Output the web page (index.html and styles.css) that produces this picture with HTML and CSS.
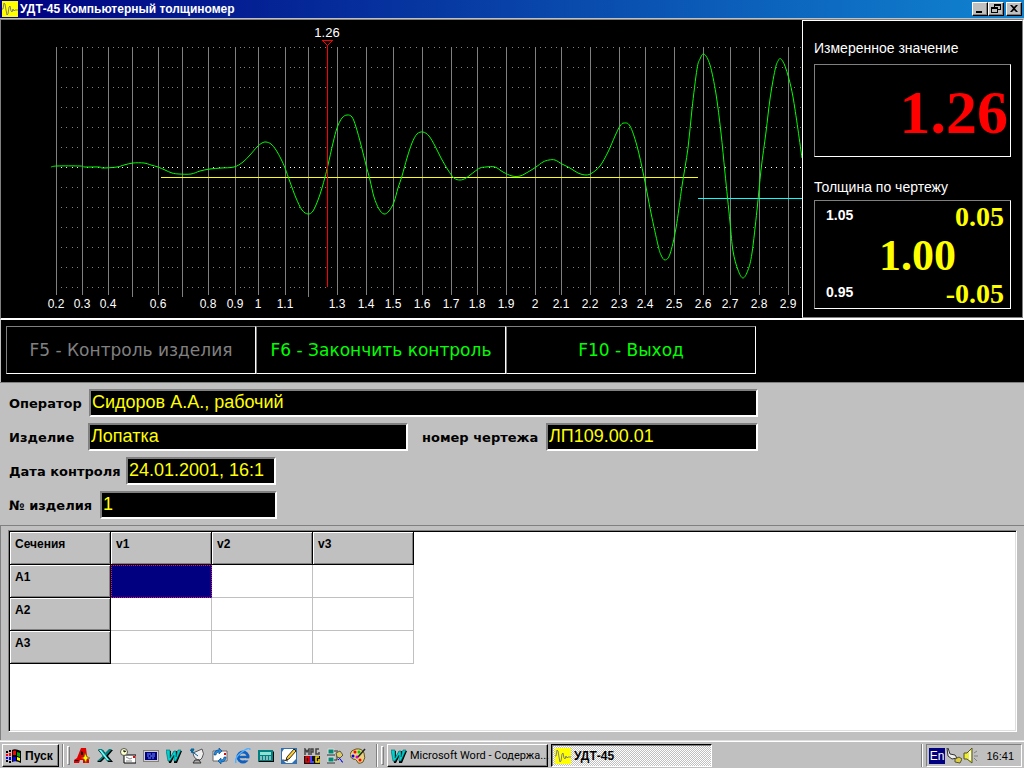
FILE: index.html
```html
<!DOCTYPE html>
<html lang="ru">
<head>
  <meta charset="UTF-8" />
  <meta name="viewport" content="width=device-width, initial-scale=1.0" />
  <title>УДТ-45 Компьютерный толщиномер</title>
  <link rel="stylesheet" href="styles.css">
</head>
<body>
  <header class="titlebar">
    <svg class="icon" viewBox="0 0 16 16"><rect width="16" height="16" fill="#ff0"/><path d="M0 8h1l1-6 1 1 1 6 1 5 1-1 1-7 1-1 1 5 1 1 1-3 1 2 1-1 3 0" fill="none" stroke="#808080"/></svg>
    <h1>УДТ-45 Компьютерный толщиномер</h1>
    <div class="window-buttons">
      <button aria-label="Свернуть"><svg viewBox="0 0 14 12"><path d="M3 8h6v2H3z"/></svg></button>
      <button aria-label="Восстановить"><svg viewBox="0 0 14 12"><path d="M5 1h7v6H9V6h2V3H6v1H5zM2 4h7v6H2zm1 2v3h5V6z" fill-rule="evenodd"/></svg></button>
      <button class="close" aria-label="Закрыть"><svg viewBox="0 0 14 12"><path d="M3 2h2l2 2 2-2h2L8 5.500l3 3.500H9L7 7 5 9H3l3-3.500z"/></svg></button>
    </div>
  </header>

  <main>
    <section class="scope">
      <svg class="chart" viewBox="0 0 801 298" preserveAspectRatio="xMinYMin meet">
        <g id="grid" shape-rendering="crispEdges"></g>
        <g id="labels"></g>
        <path class="gate" d="M160 157.500H697" stroke="#ff0"/>
        <path class="gate" d="M697 178.500H801" stroke="#0ff"/>
        <path id="signal" fill="none" stroke="#0f0"/>
        <path class="gate" d="M326.500 25V267M321.500 20.500h10l-5 5z" stroke="#f00" fill="none"/>
        <text class="cursor" x="326" y="17">1.26</text>
      </svg>
      <aside class="readout">
        <h2>Измеренное значение</h2>
        <div class="measured">1.26</div>
        <h2>Толщина по чертежу</h2>
        <div class="nominal">
          <div class="limits"><span>1.05</span><b>0.05</b></div>
          <strong>1.00</strong>
          <div class="limits"><span>0.95</span><b>-0.05</b></div>
        </div>
      </aside>
    </section>

    <nav class="keys">
      <button disabled>F5 - Контроль изделия</button>
      <button>F6 - Закончить контроль</button>
      <button>F10 - Выход</button>
    </nav>

    <form class="details">
      <div class="row">
        <label for="operator">Оператор</label>
        <input id="operator" class="wide" value="Сидоров А.А., рабочий">
      </div>
      <div class="row">
        <label for="product" class="product-label">Изделие</label>
        <input id="product" class="product" value="Лопатка">
        <label for="drawing" class="drawing-label">номер чертежа</label>
        <input id="drawing" class="drawing" value="ЛП109.00.01">
      </div>
      <div class="row">
        <label for="date" class="date-label">Дата контроля</label>
        <input id="date" class="date" value="24.01.2001, 16:1">
      </div>
      <div class="row">
        <label for="number" class="number-label">№ изделия</label>
        <input id="number" class="number" value="1">
      </div>
    </form>

    <section class="results">
      <div class="sheet">
        <table>
          <tr><th>Сечения</th><th>v1</th><th>v2</th><th>v3</th></tr>
          <tr><th>A1</th><td class="selected"></td><td></td><td></td></tr>
          <tr><th>A2</th><td></td><td></td><td></td></tr>
          <tr><th>A3</th><td></td><td></td><td></td></tr>
        </table>
      </div>
    </section>
  </main>

  <footer class="taskbar">
    <button class="start">
      <svg class="icon" viewBox="0 0 16 16"><path d="M6 2q3-2 9 1v12q-5-3-9-1z" fill="#000"/><path d="M7 3q2-1 3 0v4H7z" fill="#f00"/><path d="M11 4l3 1v4l-3-1z" fill="#0a0"/><path d="M7 9h3v4H7z" fill="#00f"/><path d="M11 9l3 1v3l-3-1z" fill="#ff0"/><path d="M0 3h2v2H0zM3 2h2v2H3z" fill="#000"/><path d="M0 6h2v2H0zM3 5h2v3H3z" fill="#f00"/><path d="M0 9h2v2H0zM3 9h2v3H3z" fill="#00f"/><path d="M0 12h2v2H0zM3 13h2v2H3z" fill="#000"/></svg>
      Пуск
    </button>
    <i class="divider"></i>
    <i class="grip"></i>
    <div class="quick">
      <svg class="icon" viewBox="0 0 16 16"><path d="M7 0h5l1 8 2 4v3H9v-3H6l-1 3H0v-3l3-2z" fill="#e00000"/><path d="M7 3l2 1v3H7zM1 12h4l-1 1H1z" fill="#000"/><path d="M11 5l2 4 3 1-3 1-1 4-2-4-3-1 3-1z" fill="#ff0" stroke="#804000" stroke-width=".6"/></svg>
      <svg class="icon" viewBox="0 0 16 16"><path d="M1 2h5l3 4 3-4h4l-5 6 5 6h-5l-3-4-4 4H0l6-6z" fill="#000"/><path d="M1 1h4l3 4 4-4h3L9 8l5 5h-4L7 9l-4 4H0l6-5z" fill="#008080"/><path d="M2 2h2l8 10h-2z" fill="#7ff"/></svg>
      <svg class="icon" viewBox="0 0 16 16"><path d="M4 7h12v8H4z" fill="#fff" stroke="#000"/><path d="M6 9l4 2 2-1M6 13h6" stroke="#888" fill="none"/><path d="M13 8h2v2h-2z" fill="#f00"/><circle cx="4" cy="4" r="3.500" fill="#ffc" stroke="#555"/><path d="M4 2v2l2-1" fill="none" stroke="#000"/></svg>
      <svg class="icon" viewBox="0 0 16 16"><path d="M0 2h16v12H0z" fill="#808080"/><path d="M1 3h14v10H1z" fill="#d4d0c8"/><path d="M2 4h12v8H2z" fill="#000080"/><path d="M4 6h4M9 6h3M4 8h2M7 8h5M5 10h3M9 10h2" stroke="#7090ff"/></svg>
      <svg class="icon" viewBox="0 0 16 16"><path d="M1 3h4l0 6 3-6h3v6l2-6h3l-5 12H8V9l-3 6H3z" fill="#000"/><path d="M0 2h4v8l4-7h2v6l2-7h3l-5 11H8V7l-4 6H2z" fill="#00d0d0" stroke="#006060" stroke-width=".6"/></svg>
      <svg class="icon" viewBox="0 0 16 16"><path d="M4 5l9-4q3 5 0 9l-2 2q-6 0-7-7z" fill="#eee" stroke="#555"/><path d="M1 2l8 6M2 1h3L3 5z" fill="#008080" stroke="#0060a0"/><path d="M6 12l-2 3h8l-2-3z" fill="#aaa" stroke="#333"/></svg>
      <svg class="icon" viewBox="0 0 16 16"><path d="M1 3h14v10H1z" fill="#fff" stroke="#666"/><path d="M12 5h2v2h-2z" fill="#f00"/><path d="M2 7q0-5 5-5V0l3 3-3 3V4q-3 0-3 3z" fill="#208be0" stroke="#004080" stroke-width=".6"/><path d="M14 9q0 5-5 5v2l-3-3 3-3v2q3 0 3-3z" fill="#208be0" stroke="#004080" stroke-width=".6"/></svg>
      <svg class="icon" viewBox="0 0 16 16"><circle cx="8" cy="9" r="5" fill="none" stroke="#1060c0" stroke-width="3"/><path d="M4 9h10" stroke="#1060c0" stroke-width="2.400"/><path d="M10 10.400h5v2h-5z" fill="#c0c0c0"/><path d="M1 15Q-1 10 7 4T15 2" fill="none" stroke="#50b0ff" stroke-width="1.500"/></svg>
      <svg class="icon" viewBox="0 0 16 16"><path d="M0 3h15l1 1v10H1l-1-1z" fill="#000"/><path d="M0 2h15v11H0z" fill="#008080"/><path d="M2 4h11v3H2z" fill="#8fe0d0"/><path d="M2 9h2M5 9h2M8 9h2M11 9h2M2 11h2M5 11h2M8 11h2M11 11h2" stroke="#fff"/></svg>
      <svg class="icon" viewBox="0 0 16 16"><path d="M0 0h16v16H0z" fill="#3070b0"/><path d="M3 1h9l3 3v7l-4 4H5l-4-4V4z" fill="#fff"/><path d="M5 12l1-3 7-8 2 2-7 8z" fill="#fc3" stroke="#000" stroke-width=".8"/><path d="M2 12l5 1" stroke="#333"/></svg>
      <svg class="icon" viewBox="0 0 16 16"><path d="M0 8h16v8H0z" fill="#111"/><path d="M1 7V1l2 3 2-3v6M7 7V1h2v3H7M15 1h-3v5h3V4" stroke="#444" stroke-width="1.500" fill="none"/><path d="M2 9v5h3V9z" stroke="#f00" stroke-width="1.500" fill="none"/><path d="M7 8v6h3" stroke="#44f" stroke-width="2" fill="none"/><path d="M15 9h-3v5h3v-3" stroke="#fd0" stroke-width="1.500" fill="none"/></svg>
      <svg class="icon" viewBox="0 0 16 16"><path d="M1 1h6v5H1zM1 9h6v5H1z" fill="#087" stroke="#ddd"/><path d="M0 7h8M0 15h8M7 3h4M7 12h3V8h2" stroke="#333" fill="none"/><path d="M9 5l4-2 3 4-3 3-3-1z" fill="#dc6" stroke="#554"/><path d="M11 12q2-3 3 0t2 2" stroke="#00f" fill="none"/></svg>
      <svg class="icon" viewBox="0 0 16 16"><path d="M6 1q6-1 8 4 2 5-1 9-5 3-6-1-1-2-4-2-4-2-3-5 1-4 6-5z" fill="#e8d080" stroke="#652"/><circle cx="5" cy="4" r="1.500" fill="#f00"/><circle cx="9" cy="4" r="1.500" fill="#0c0"/><circle cx="3" cy="8" r="1.500" fill="#00f"/><circle cx="7" cy="9" r="1.500" fill="#d0d"/><circle cx="10" cy="12" r="1.500" fill="#f00"/><path d="M8 9l7-8" stroke="#222" stroke-width="1.500"/></svg>
    </div>
    <i class="divider"></i>
    <i class="grip"></i>
    <button class="task">
      <svg class="icon" viewBox="0 0 16 16"><path d="M1 3h4l0 6 3-6h3v6l2-6h3l-5 12H8V9l-3 6H3z" fill="#000"/><path d="M0 2h4v8l4-7h2v6l2-7h3l-5 11H8V7l-4 6H2z" fill="#00d0d0" stroke="#006060" stroke-width=".6"/></svg>
      <span>Microsoft Word - Содержа...</span>
    </button>
    <button class="task active">
      <svg class="icon" viewBox="0 0 16 16"><rect width="16" height="16" fill="#ff0"/><path d="M0 8h1l1-6 1 1 1 6 1 5 1-1 1-7 1-1 1 5 1 1 1-3 1 2 1-1 3 0" fill="none" stroke="#808080"/></svg>
      <span>УДТ-45</span>
    </button>
    <i class="divider tray-divider"></i>
    <div class="tray">
      <span class="lang">En</span>
      <svg class="icon" viewBox="0 0 16 16"><path d="M1 0l1 8 4 3 5-1-2-3-5-1-2-6z" fill="#eee" stroke="#333"/><path d="M9 11l4-2 3 2-2 4-5-1z" fill="#dc4" stroke="#553"/></svg>
      <svg class="icon" viewBox="0 0 16 16"><path d="M1 5h3l5-5v15l-5-4H1z" fill="#ee3" stroke="#552"/><path d="M7 3v9" stroke="#fff" stroke-width="2"/><path d="M11 5l3-2M11 8h4M11 10l3 3" stroke="#808080"/></svg>
      <time>16:41</time>
    </div>
  </footer>

  <script>
    // x position, label ('' = long tick without a label)
    const ticks = [
      [55, '0.2'], [81, '0.3'], [107, '0.4'], [131, ''], [157, '0.6'], [181, ''],
      [207, '0.8'], [234, '0.9'], [257, '1'], [284, '1.1'], [307, ''], [336, '1.3'],
      [365, '1.4'], [392, '1.5'], [421, '1.6'], [450, '1.7'], [476, '1.8'], [505, '1.9'],
      [534, '2'], [560, '2.1'], [589, '2.2'], [618, '2.3'], [644, '2.4'], [673, '2.5'],
      [702, '2.6'], [729, '2.7'], [758, '2.8'], [787, '2.9']
    ];

    const signal = [
      [50,147],[56,146],[79,146],[84,147],[98,147],[102,148],[116,147],[123,145],[132,143],[143,143],
      [150,145],[157,147],[164,150],[171,153],[178,154],[190,154],[199,151],[209,149],[220,148],[233,147],
      [242,142],[249,135],[256,127],[261,123],[265,122],[270,124],[275,130],[280,139],[284,148],[289,162],
      [295,178],[301,190],[307,194],[312,191],[317,180],[321,168],[324,157],[327,145],[332,123],[336,108],
      [341,98],[346,95],[351,97],[355,107],[360,125],[365,145],[369,160],[373,177],[378,189],[383,194],
      [388,191],[393,182],[397,168],[401,156],[406,138],[411,123],[416,114],[422,112],[428,116],[434,126],
      [440,138],[447,150],[453,158],[459,160],[465,158],[473,152],[479,148],[485,147],[494,147],[502,152],
      [511,156],[519,156],[527,152],[535,147],[542,142],[548,140],[554,140],[561,144],[569,148],[577,153],
      [585,155],[591,153],[599,146],[607,132],[614,116],[619,106],[623,103],[629,106],[636,126],[643,157],
      [650,193],[657,225],[660,235],[664,240],[669,234],[675,208],[681,166],[687,128],[691,89],[696,49],
      [699,39],[703,34],[709,45],[715,74],[720,113],[724,153],[729,202],[732,231],[737,250],[742,258],
      [747,250],[751,233],[756,190],[760,150],[765,112],[769,79],[774,50],[777,41],[780,39],[785,49],
      [792,77],[801,138]
    ];

    let grid = '';
    let labels = '';
    ticks.forEach(([x, label], i) => {
      grid += `<rect class="line" x="${x}" y="27" width="1" height="${label ? 248 : 250}"/>`;
      if (label) labels += `<text x="${x}" y="288">${label}</text>`;
      const next = i + 1 < ticks.length ? ticks[i + 1][0] : 816;
      for (let k = 1; k < 5; k++) {
        const dx = x + Math.round((next - x) * k / 5);
        if (dx > 800) break;
        for (let y = 27; y <= 267; y += 20) {
          grid += `<rect class="${y === 147 ? 'dot zero' : 'dot'}" x="${dx}" y="${y}" width="1" height="1"/>`;
        }
      }
    });
    document.getElementById('grid').innerHTML = grid;
    document.getElementById('labels').innerHTML = labels;

    // smooth curve through the samples
    let d = `M${signal[0]}`;
    for (let i = 0; i < signal.length - 1; i++) {
      const p0 = signal[Math.max(i - 1, 0)];
      const p1 = signal[i];
      const p2 = signal[i + 1];
      const p3 = signal[Math.min(i + 2, signal.length - 1)];
      d += `C${p1[0] + (p2[0] - p0[0]) / 6},${p1[1] + (p2[1] - p0[1]) / 6} `
        + `${p2[0] - (p3[0] - p1[0]) / 6},${p2[1] - (p3[1] - p1[1]) / 6} ${p2[0]},${p2[1]}`;
    }
    document.getElementById('signal').setAttribute('d', d);
  </script>
</body>
</html>
```

FILE: styles.css
```css
* {
  box-sizing: border-box;
}
body {
  margin: 0;
  min-height: 100vh;
  display: flex;
  flex-direction: column;
  background: #c0c0c0;
  color: #000;
  font-family: "Liberation Sans", Arial, sans-serif;
  font-size: 12px;
}
h1, h2 {
  margin: 0;
}
button, input {
  font-family: inherit;
  margin: 0;
  border-radius: 0;
}
.icon {
  width: 16px;
  height: 16px;
  flex: none;
}

/* title bar */
.titlebar {
  display: flex;
  align-items: center;
  height: 18px;
  padding: 0 2px;
  background: linear-gradient(to right, #000080, #1084d0);
}
.titlebar h1 {
  flex: 1;
  padding-left: 2px;
  color: #fff;
  font-size: 12px;
  line-height: 18px;
}
.window-buttons {
  display: flex;
}
.window-buttons button {
  width: 16px;
  height: 14px;
  padding: 0;
  border: 1px solid;
  border-color: #fff #000 #000 #fff;
  background: #c0c0c0;
  box-shadow: inset -1px -1px #808080;
}
.window-buttons svg {
  display: block;
  width: 14px;
  height: 12px;
}
.window-buttons .close {
  margin-left: 2px;
}

main {
  flex: 1;
  display: flex;
  flex-direction: column;
  border-top: 1px solid #c0c0c0;
}

/* oscilloscope */
.scope {
  display: flex;
  border: 1px solid #808080;
  border-right-color: #fff;
  border-bottom: 2px solid #fff;
  background: #000;
}
.chart {
  flex: 1;
  min-width: 0;
  height: 298px;
}
.chart text {
  fill: #fff;
  font-size: 12px;
  text-anchor: middle;
}
.chart .cursor {
  font-size: 13px;
}
.line, .dot {
  fill: #808080;
}
.zero {
  fill: #fff;
}
.gate {
  shape-rendering: crispEdges;
}
.readout {
  width: 221px;
  padding: 18px 11px 0;
  border: 1px solid;
  border-color: #fff #808080 #808080 #fff;
}
.readout h2 {
  color: #fff;
  font-size: 14px;
  font-weight: normal;
  line-height: 18px;
}
.measured, .nominal {
  border: 1px solid;
  border-color: #808080 #fff #fff #808080;
  font-family: "Liberation Serif", "Times New Roman", serif;
  font-weight: bold;
}
.measured {
  height: 93px;
  margin: 7px 0 21px;
  padding-right: 2px;
  color: #f00;
  font-size: 62px;
  line-height: 94px;
  text-align: right;
}
.nominal {
  height: 109px;
  margin-top: 4px;
  padding: 2px 6px 0 11px;
  color: #ff0;
}
.nominal strong {
  display: block;
  padding-left: 5px;
  font-size: 44px;
  line-height: 49px;
  text-align: center;
}
.limits {
  display: flex;
  justify-content: space-between;
  font-size: 28px;
  line-height: 28px;
}
.limits span {
  color: #fff;
  font-family: "Liberation Sans", Arial, sans-serif;
  font-size: 14px;
  line-height: 25px;
}

/* function keys */
.keys {
  display: flex;
  height: 62px;
  padding: 6px 5px;
  margin-left: 1px;
  background: #000;
}
.keys button {
  width: 250px;
  height: 48px;
  padding: 0;
  border: 1px solid;
  border-color: #808080 #fff #fff #808080;
  background: #000;
  color: #0f0;
  font-family: "DejaVu Sans", Verdana, sans-serif;
  font-size: 17px;
}
.keys button:disabled {
  color: #808080;
}

/* inspection details */
.details {
  display: flex;
  flex-direction: column;
  gap: 6px;
  padding: 6px 9px;
  border-top: 1px solid #808080;
}
.row {
  display: flex;
  align-items: center;
}
.row label {
  width: 80px;
  font-family: "DejaVu Sans", Verdana, sans-serif;
  font-size: 13px;
  font-weight: bold;
  white-space: nowrap;
}
.row input {
  height: 28px;
  padding: 0 1px 2px;
  border: 2px solid;
  border-color: #808080 #fff #fff #808080;
  background: #000;
  color: #ff0;
  font-size: 18px;
}
.row .wide {
  width: 669px;
}
.row .product-label {
  width: 79px;
}
.row .product {
  width: 320px;
}
.row .drawing-label {
  width: 138px;
  padding-left: 14px;
}
.row .drawing {
  width: 212px;
}
.row .date-label {
  width: 117px;
}
.row .date {
  width: 150px;
}
.row .number-label {
  width: 91px;
}
.row .number {
  width: 177px;
}

/* results */
.results {
  flex: 1;
  display: flex;
  padding: 4px 7px 8px;
  border: 1px solid #808080;
  border-right: 0;
  border-bottom: 0;
}
.sheet {
  flex: 1;
  border: 1px solid;
  border-color: #808080 #fff #fff #808080;
  box-shadow: inset 1px 1px #000, inset -1px -1px #dfdfdf;
  background: #fff;
  padding: 1px;
}
table {
  border-collapse: separate;
  border-spacing: 0;
}
th, td {
  width: 101px;
  height: 33px;
  padding: 0;
  border: solid #c0c0c0;
  border-width: 0 1px 1px 0;
}
th {
  padding: 4px 5px 0;
  border-color: #000;
  background: #c0c0c0;
  box-shadow: inset 1px 1px #fff, inset -1px -1px #808080;
  font-size: 12px;
  line-height: 16px;
  text-align: left;
  vertical-align: top;
}
.selected {
  background: #000080;
  border: 1px dotted #ff0080;
}

/* taskbar */
.taskbar {
  display: flex;
  align-items: center;
  gap: 3px;
  height: 28px;
  padding: 2px 2px 0;
  border-top: 1px solid #dfdfdf;
  box-shadow: inset 0 1px #fff;
}
.taskbar button {
  display: flex;
  align-items: center;
  gap: 3px;
  height: 23px;
  padding: 0 3px;
  border: 1px solid;
  border-color: #fff #000 #000 #fff;
  background: #c0c0c0;
  box-shadow: inset -1px -1px #808080;
  color: #000;
  font-size: 12px;
  white-space: nowrap;
}
.taskbar .start {
  width: 57px;
  font-weight: bold;
}
.divider {
  width: 2px;
  height: 23px;
  border-left: 1px solid #808080;
  border-right: 1px solid #fff;
}
.grip {
  width: 3px;
  height: 19px;
  border: 1px solid;
  border-color: #fff #808080 #808080 #fff;
}
.quick {
  display: flex;
  gap: 7px;
  padding: 0 7px 0 1px;
}
.taskbar .task {
  width: 161px;
  font-family: Roboto, "Liberation Sans", sans-serif;
  font-size: 11px;
}
.taskbar .active {
  border-color: #000 #fff #fff #000;
  box-shadow: inset 1px 1px #808080;
  background: repeating-conic-gradient(#fff 0 25%, #c0c0c0 0 50%) 0 0 / 2px 2px;
  font-family: inherit;
  font-size: 12px;
  font-weight: bold;
}
.tray-divider {
  margin-left: auto;
}
.tray {
  display: flex;
  align-items: center;
  gap: 1px;
  width: 96px;
  height: 23px;
  padding: 0 2px;
  border: 1px solid;
  border-color: #808080 #fff #fff #808080;
}
.lang {
  width: 16px;
  background: #000080;
  color: #fff;
  line-height: 16px;
  text-align: center;
}
.tray time {
  margin-left: auto;
  padding-right: 5px;
  font-size: 11px;
}
```
